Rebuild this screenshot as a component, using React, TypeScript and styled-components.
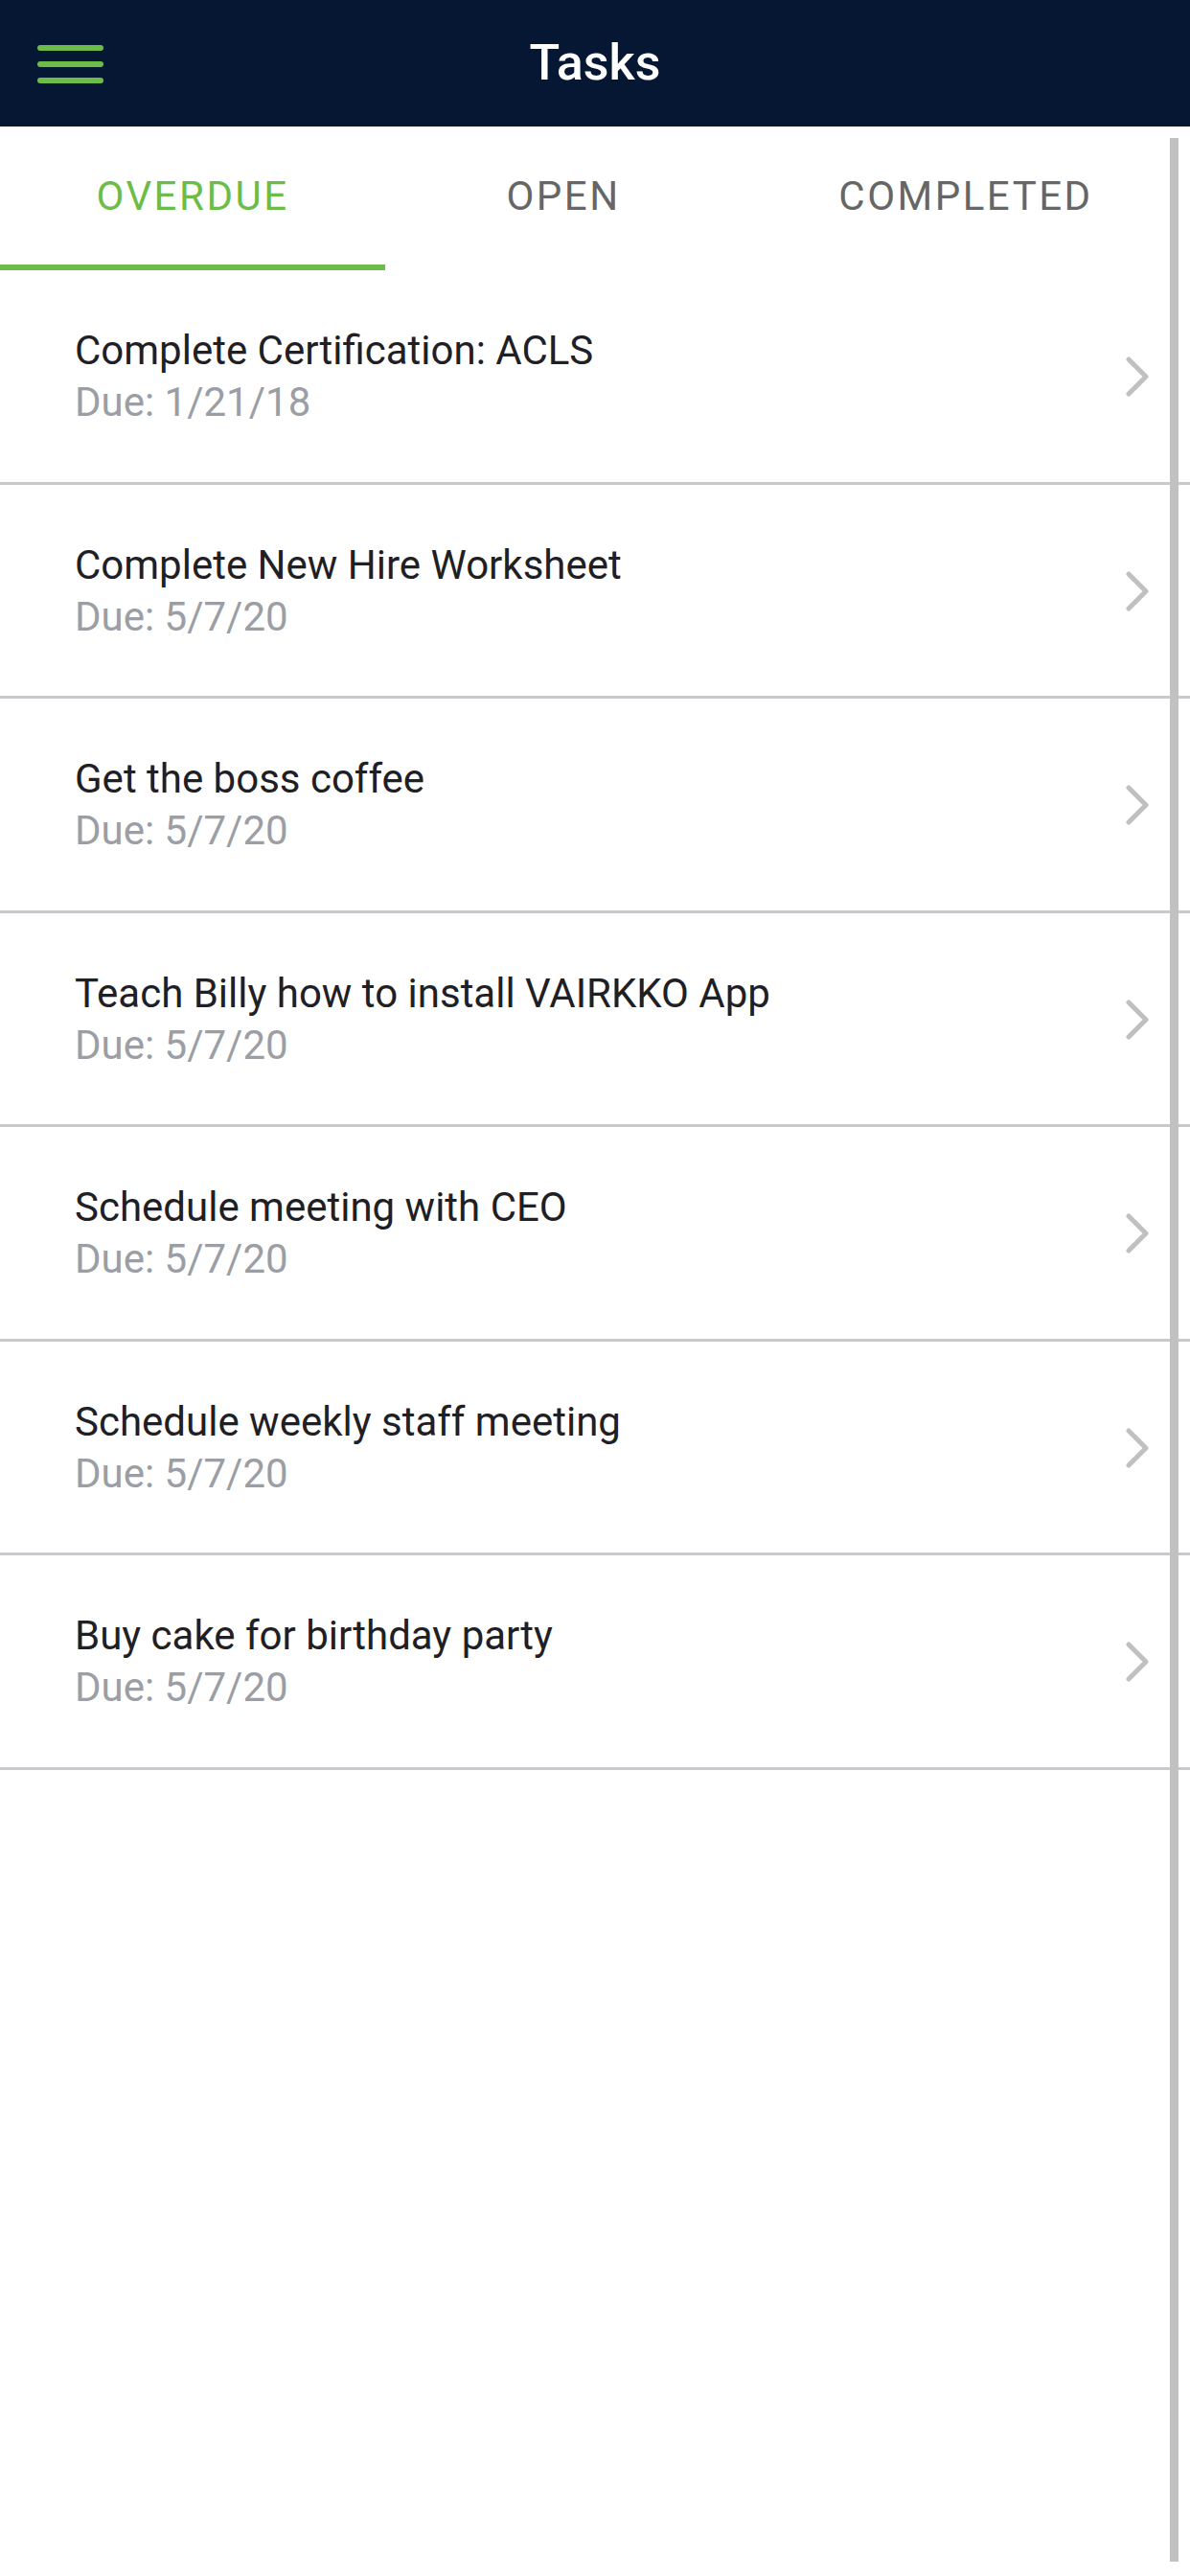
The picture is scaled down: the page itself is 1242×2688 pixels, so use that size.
import * as React from "react";
import styled, { createGlobalStyle } from "styled-components";

interface ITask {
  id: string;
  name: string;
  due: string;
}

interface ITabProps {
  readonly isActive: boolean;
}

const TASKS: ITask[] = [
  { id: "1", name: "Complete Certification: ACLS", due: "1/21/18" },
  { id: "2", name: "Complete New Hire Worksheet", due: "5/7/20" },
  { id: "3", name: "Get the boss coffee", due: "5/7/20" },
  { id: "4", name: "Teach Billy how to install VAIRKKO App", due: "5/7/20" },
  { id: "5", name: "Schedule meeting with CEO", due: "5/7/20" },
  { id: "6", name: "Schedule weekly staff meeting", due: "5/7/20" },
  { id: "7", name: "Buy cake for birthday party", due: "5/7/20" },
];

const TABS = ["OVERDUE", "OPEN", "COMPLETED"];

const App: React.FunctionComponent = () => {
  const [activeTab, setActiveTab] = React.useState(0);

  return (
    <>
      <GlobalStyle />
      <Screen>
        <Header>
          <MenuButton aria-label="menu">
            <MenuBar />
            <MenuBar />
            <MenuBar />
          </MenuButton>
          <Title>Tasks</Title>
          <span />
        </Header>

        <TabBar>
          {TABS.map((tab, index) => (
            <Tab
              key={tab}
              isActive={index === activeTab}
              onClick={() => setActiveTab(index)}
            >
              {tab}
            </Tab>
          ))}
        </TabBar>

        <TaskList>
          {TASKS.map((task) => (
            <TaskRow key={task.id}>
              <TaskText>
                <TaskName>{task.name}</TaskName>
                <TaskDue>Due: {task.due}</TaskDue>
              </TaskText>
              <Chevron viewBox="0 0 24 42" aria-hidden="true">
                <polyline points="3,3 21,21 3,39" />
              </Chevron>
            </TaskRow>
          ))}
        </TaskList>

        <ScrollIndicator />
      </Screen>
    </>
  );
};

const GlobalStyle = createGlobalStyle`
  html, body {
    margin: 0;
    padding: 0;
    background: #fff;
  }
  body {
    font-family: Roboto, "Noto Sans", sans-serif;
  }
`;

const Screen = styled.div`
  position: relative;
  width: 1242px;
  min-height: 2688px;
  background: #fff;
  overflow: hidden;
`;

const Header = styled.header`
  display: grid;
  grid-template-columns: 1fr auto 1fr;
  align-items: center;
  height: 132px;
  padding: 0 39px;
  box-sizing: border-box;
  background: #061733;
`;

const MenuButton = styled.button`
  display: flex;
  flex-direction: column;
  gap: 11px;
  width: 69px;
  padding: 0;
  margin-top: 2px;
  border: none;
  background: none;
  cursor: pointer;
`;

const MenuBar = styled.span`
  display: block;
  height: 6px;
  border-radius: 3px;
  background: #6cbd47;
`;

const Title = styled.h1`
  margin: 0;
  color: #fff;
  font-size: 52px;
  font-weight: 500;
  line-height: 1;
`;

const TabBar = styled.nav`
  display: grid;
  grid-template-columns: 402px 372px 1fr;
  height: 150px;
`;

const Tab = styled.div<ITabProps>`
  display: flex;
  align-items: center;
  justify-content: center;
  border-bottom: 6px solid
    ${({ isActive }) => (isActive ? "#6cbd47" : "transparent")};
  color: ${({ isActive }) => (isActive ? "#6cbd47" : "#666666")};
  font-size: 42px;
  font-weight: 400;
  letter-spacing: 2.5px;
  cursor: pointer;
`;

const TaskList = styled.ul`
  margin: 0;
  padding: 0;
  list-style: none;
`;

const TaskRow = styled.li`
  display: flex;
  align-items: center;
  height: 223.5px;
  box-sizing: border-box;
  padding: 2px 43px 0 78px;
  border-bottom: 3px solid #c9c9cd;
`;

const TaskText = styled.div`
  flex: 1;
  display: flex;
  flex-direction: column;
  font-size: 42px;
  line-height: 54px;
`;

const TaskName = styled.div`
  color: #1f2024;
`;

const TaskDue = styled.div`
  color: #9b9ea5;
`;

const Chevron = styled.svg`
  width: 24px;
  height: 42px;
  fill: none;
  stroke: #c0c0c0;
  stroke-width: 5;
  stroke-linecap: round;
  stroke-linejoin: round;
`;

const ScrollIndicator = styled.div`
  position: absolute;
  top: 144px;
  right: 12px;
  width: 9px;
  height: 2529px;
  background: #c1c1c1;
`;

export default App;
